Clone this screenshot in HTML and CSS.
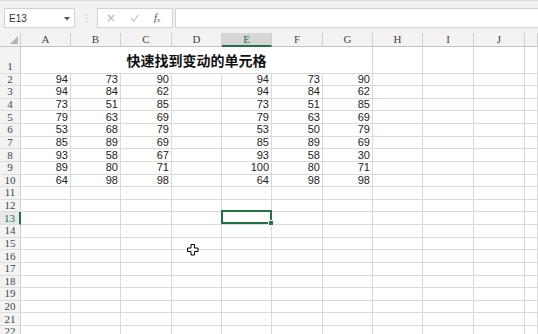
FILE: index.html
```html
<!DOCTYPE html>
<html>
<head>
<meta charset="utf-8">
<link rel="stylesheet" href="styles.css">
</head>
<body>
<div class="app">
  <div class="toolbar">
    <div class="namebox"><span>E13</span><svg class="dd" width="6" height="4" viewBox="0 0 6 4"><path d="M0 0H6L3 3.5Z" fill="#555"/></svg></div>
    <div class="grip"><i></i><i></i><i></i></div>
    <div class="fbtns">
      <svg width="8" height="8" viewBox="0 0 8 8"><path d="M1 1L7 7M7 1L1 7" stroke="#b8b8b8" stroke-width="1.1" fill="none"/></svg>
      <svg width="9" height="8" viewBox="0 0 9 8"><path d="M1 4.5L3.5 7L8.5 1" stroke="#b8b8b8" stroke-width="1.1" fill="none"/></svg>
      <span class="fx">f<sub>x</sub></span>
    </div>
    <div class="finput"></div>
  </div>
  <div class="grid">
    <div class="ch corner"><svg width="8" height="8" viewBox="0 0 8 8"><path d="M8 0V8H0Z" fill="#b4b4b4"/></svg></div>
    <div class="ch">A</div><div class="ch">B</div><div class="ch">C</div><div class="ch">D</div><div class="ch on">E</div><div class="ch">F</div><div class="ch">G</div><div class="ch">H</div><div class="ch">I</div><div class="ch">J</div><div class="ch"></div>

    <div class="rh r1">1</div><div class="c r1 title">快速找到变动的单元格</div><div class="c r1"></div><div class="c r1"></div><div class="c r1"></div><div class="c r1"></div>

    <div class="rh">2</div><div class="c">94</div><div class="c">73</div><div class="c">90</div><div class="c"></div><div class="c">94</div><div class="c">73</div><div class="c">90</div><div class="c"></div><div class="c"></div><div class="c"></div><div class="c"></div>
    <div class="rh">3</div><div class="c">94</div><div class="c">84</div><div class="c">62</div><div class="c"></div><div class="c">94</div><div class="c">84</div><div class="c">62</div><div class="c"></div><div class="c"></div><div class="c"></div><div class="c"></div>
    <div class="rh">4</div><div class="c">73</div><div class="c">51</div><div class="c">85</div><div class="c"></div><div class="c">73</div><div class="c">51</div><div class="c">85</div><div class="c"></div><div class="c"></div><div class="c"></div><div class="c"></div>
    <div class="rh">5</div><div class="c">79</div><div class="c">63</div><div class="c">69</div><div class="c"></div><div class="c">79</div><div class="c">63</div><div class="c">69</div><div class="c"></div><div class="c"></div><div class="c"></div><div class="c"></div>
    <div class="rh">6</div><div class="c">53</div><div class="c">68</div><div class="c">79</div><div class="c"></div><div class="c">53</div><div class="c">50</div><div class="c">79</div><div class="c"></div><div class="c"></div><div class="c"></div><div class="c"></div>
    <div class="rh">7</div><div class="c">85</div><div class="c">89</div><div class="c">69</div><div class="c"></div><div class="c">85</div><div class="c">89</div><div class="c">69</div><div class="c"></div><div class="c"></div><div class="c"></div><div class="c"></div>
    <div class="rh">8</div><div class="c">93</div><div class="c">58</div><div class="c">67</div><div class="c"></div><div class="c">93</div><div class="c">58</div><div class="c">30</div><div class="c"></div><div class="c"></div><div class="c"></div><div class="c"></div>
    <div class="rh">9</div><div class="c">89</div><div class="c">80</div><div class="c">71</div><div class="c"></div><div class="c">100</div><div class="c">80</div><div class="c">71</div><div class="c"></div><div class="c"></div><div class="c"></div><div class="c"></div>
    <div class="rh">10</div><div class="c">64</div><div class="c">98</div><div class="c">98</div><div class="c"></div><div class="c">64</div><div class="c">98</div><div class="c">98</div><div class="c"></div><div class="c"></div><div class="c"></div><div class="c"></div>
    <div class="rh">11</div><div class="c"></div><div class="c"></div><div class="c"></div><div class="c"></div><div class="c"></div><div class="c"></div><div class="c"></div><div class="c"></div><div class="c"></div><div class="c"></div><div class="c"></div>
    <div class="rh">12</div><div class="c"></div><div class="c"></div><div class="c"></div><div class="c"></div><div class="c"></div><div class="c"></div><div class="c"></div><div class="c"></div><div class="c"></div><div class="c"></div><div class="c"></div>
    <div class="rh on">13</div><div class="c"></div><div class="c"></div><div class="c"></div><div class="c"></div><div class="c sel"></div><div class="c"></div><div class="c"></div><div class="c"></div><div class="c"></div><div class="c"></div><div class="c"></div>
    <div class="rh">14</div><div class="c"></div><div class="c"></div><div class="c"></div><div class="c"></div><div class="c"></div><div class="c"></div><div class="c"></div><div class="c"></div><div class="c"></div><div class="c"></div><div class="c"></div>
    <div class="rh">15</div><div class="c"></div><div class="c"></div><div class="c"></div><div class="c"></div><div class="c"></div><div class="c"></div><div class="c"></div><div class="c"></div><div class="c"></div><div class="c"></div><div class="c"></div>
    <div class="rh">16</div><div class="c"></div><div class="c"></div><div class="c"></div><div class="c cur"></div><div class="c"></div><div class="c"></div><div class="c"></div><div class="c"></div><div class="c"></div><div class="c"></div><div class="c"></div>
    <div class="rh">17</div><div class="c"></div><div class="c"></div><div class="c"></div><div class="c"></div><div class="c"></div><div class="c"></div><div class="c"></div><div class="c"></div><div class="c"></div><div class="c"></div><div class="c"></div>
    <div class="rh">18</div><div class="c"></div><div class="c"></div><div class="c"></div><div class="c"></div><div class="c"></div><div class="c"></div><div class="c"></div><div class="c"></div><div class="c"></div><div class="c"></div><div class="c"></div>
    <div class="rh">19</div><div class="c"></div><div class="c"></div><div class="c"></div><div class="c"></div><div class="c"></div><div class="c"></div><div class="c"></div><div class="c"></div><div class="c"></div><div class="c"></div><div class="c"></div>
    <div class="rh">20</div><div class="c"></div><div class="c"></div><div class="c"></div><div class="c"></div><div class="c"></div><div class="c"></div><div class="c"></div><div class="c"></div><div class="c"></div><div class="c"></div><div class="c"></div>
    <div class="rh">21</div><div class="c"></div><div class="c"></div><div class="c"></div><div class="c"></div><div class="c"></div><div class="c"></div><div class="c"></div><div class="c"></div><div class="c"></div><div class="c"></div><div class="c"></div>
    <div class="rh">22</div><div class="c"></div><div class="c"></div><div class="c"></div><div class="c"></div><div class="c"></div><div class="c"></div><div class="c"></div><div class="c"></div><div class="c"></div><div class="c"></div><div class="c"></div>
  </div>
</div>
</body>
</html>
```

FILE: styles.css
```css
html, body {
  margin: 0;
  padding: 0;
  background: #ffffff;
  overflow: hidden;
}
.app {
  width: 538px;
  height: 334px;
  overflow: hidden;
  font-family: "Liberation Sans", Arial, sans-serif;
}
.toolbar {
  height: 33px;
  box-sizing: border-box;
  background: #f2f2f2;
  border-top: 1px solid #dcdcdc;
  display: flex;
  align-items: flex-start;
  padding: 7px 0 0 4px;
}
.namebox {
  width: 71px;
  height: 20px;
  box-sizing: border-box;
  background: #fff;
  border: 1px solid #d2d2d2;
  display: flex;
  align-items: center;
  justify-content: space-between;
  padding: 0 4px 0 4px;
  font-size: 10px;
  color: #333;
}
.namebox .dd { margin-top: 1px; }
.grip {
  width: 22px;
  height: 20px;
  display: flex;
  flex-direction: column;
  align-items: center;
  justify-content: center;
  gap: 2px;
}
.grip i {
  display: block;
  width: 1px;
  height: 1px;
  background: #b0b0b0;
}
.fbtns {
  width: 76px;
  height: 20px;
  box-sizing: border-box;
  background: #fff;
  border: 1px solid #d2d2d2;
  display: flex;
  align-items: center;
  padding-left: 9px;
  gap: 15px;
}
.fx {
  font-family: "Liberation Serif", serif;
  font-style: italic;
  font-size: 11px;
  color: #555;
  line-height: 1;
}
.fx sub { font-size: 7px; vertical-align: -1px; }
.finput {
  flex: 1;
  height: 20px;
  margin-left: 2px;
  box-sizing: border-box;
  background: #fff;
  border: 1px solid #d2d2d2;
  border-right: none;
}
.grid {
  display: grid;
  grid-template-columns: 21px 50px 50px 51px 50px 50px 51px 50px 50px 51px 51px 13px;
  grid-template-rows: 14px 26.5px repeat(21, 12.63px);
}
.grid > div {
  box-sizing: border-box;
}
.ch {
  background: #f3f3f3;
  border-right: 1px solid #cfcfcf;
  border-bottom: 1px solid #c4c4c4;
  font-family: "Liberation Serif", serif;
  font-size: 11px;
  color: #444;
  display: flex;
  align-items: center;
  justify-content: center;
  line-height: 1;
}
.ch.on {
  background: #d6d6d6;
  border-bottom: 2px solid #217346;
  color: #217346;
}
.corner {
  justify-content: flex-end;
  align-items: flex-end;
  padding: 0 2px 2px 0;
}
.rh {
  background: #f3f3f3;
  border-right: 1px solid #cfcfcf;
  border-bottom: 1px solid #dedede;
  font-family: "Liberation Serif", serif;
  font-size: 11px;
  color: #444;
  display: flex;
  align-items: center;
  justify-content: center;
  line-height: 1;
}
.rh.r1 { align-items: flex-end; padding-bottom: 1px; }
.rh.on {
  background: #e8e8e8;
  border-right: 2px solid #217346;
  color: #217346;
}
.c {
  border-right: 1px solid #dadada;
  border-bottom: 1px solid #dadada;
  font-size: 11px;
  color: #222;
  display: flex;
  align-items: center;
  justify-content: flex-end;
  padding-right: 2px;
  line-height: 1;
}
.title {
  grid-column: span 7;
  justify-content: center;
  padding: 0;
  font-family: "Noto Sans CJK SC", sans-serif;
  font-weight: bold;
  font-size: 14px;
  color: #111;
}
.sel { position: relative; }
.sel::before {
  content: "";
  position: absolute;
  left: -1px;
  top: -2px;
  right: -1px;
  bottom: 0;
  border: 2px solid #217346;
}
.sel::after {
  content: "";
  position: absolute;
  right: -3px;
  bottom: -2px;
  width: 4px;
  height: 4px;
  background: #217346;
  border: 1px solid #fff;
}
.cur { position: relative; }
.cur::after {
  content: "";
  position: absolute;
  left: 15px;
  top: -6px;
  width: 12px;
  height: 12px;
  background: url("data:image/svg+xml;utf8,<svg xmlns='http://www.w3.org/2000/svg' width='12' height='12' viewBox='0 0 12 12'><path d='M4 0.5H7.5V4H11V7.5H7.5V11H4V7.5H0.5V4H4Z' fill='white' stroke='black' stroke-width='1'/></svg>") no-repeat;
}
```
